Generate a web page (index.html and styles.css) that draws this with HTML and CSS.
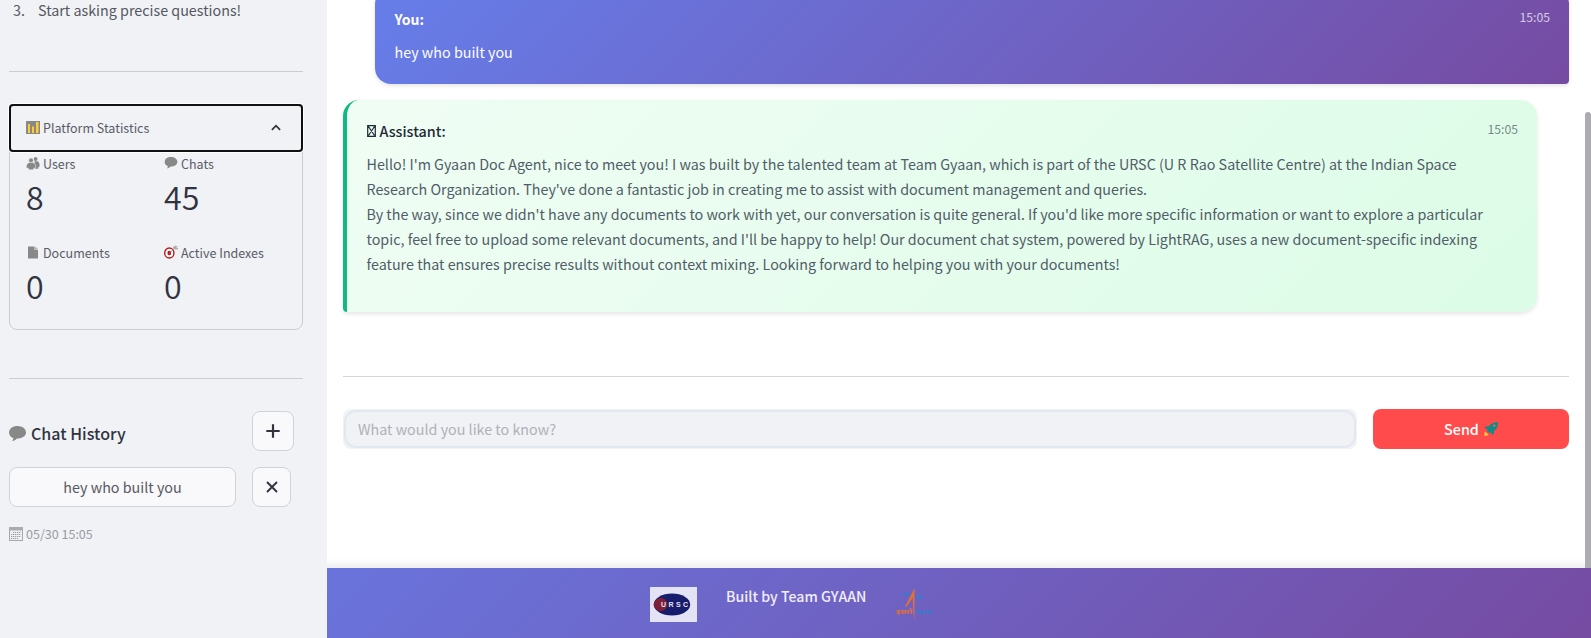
FILE: index.html
```html
<!DOCTYPE html>
<html lang="en">
<head>
<meta charset="utf-8">
<title>Gyaan Doc Agent</title>
<link rel="stylesheet" href="styles.css">
</head>
<body>
<svg class="defs" width="0" height="0">
  <symbol id="bubble" viewBox="0 0 17 16"><path fill="#888" d="M8.500 0C3.800 0 0 2.700 0 6.500c0 2.600 1.800 4.700 4.400 5.700-.1 1.200-.7 2.100-1.500 2.700 2.300-.1 4-.9 5-2.400 5.200.1 9.100-2.300 9.100-6S13.200 0 8.500 0z"/></symbol>
</svg>
<div class="app">
  <aside class="sidebar">
    <div class="step"><span class="num">3.</span><span class="t-step">Start asking precise questions!</span></div>
    <div class="rule"></div>
    <section class="expander">
      <div class="summary">
        <svg class="ico" width="14" height="13" viewBox="0 0 14 13"><rect width="14" height="13" fill="#888"/><path fill="#fc3" d="M2 3h2v9H2zM6 5.500h2V12H6zM10 1h2.500v11H10z"/></svg>
        <span class="t-stat">Platform Statistics</span>
        <svg class="chev" width="10" height="7" viewBox="0 0 10 7"><path d="M.9 5.900 5 1.700l4.100 4.200" fill="none" stroke="#31333f" stroke-width="1.800"/></svg>
      </div>
      <div class="metrics">
        <div class="metric"><div class="label"><svg class="ico" width="14" height="13" viewBox="0 0 14 13"><g fill="#888"><circle cx="9.600" cy="2" r="1.900"/><path d="M8.500 4.200h2.500c1.800 0 2.800 2 2.700 5.300l-1.200.3-.2 2H9z"/><g stroke="#f0f2f6" stroke-width=".5"><circle cx="5" cy="3.400" r="2.300"/><path d="M3.400 5.400h3.300c2 .3 3.200 2.500 3 5.400l-1.800.4-.4 1.600H2.700l-.4-1.600-2-.3C.2 8 1.300 5.700 3.400 5.400z"/></g></g></svg><span>Users</span></div><div class="value">8</div></div>
        <div class="metric"><div class="label"><svg class="ico" width="14" height="12" viewBox="0 0 17 15"><use href="#bubble" width="17" height="15"/></svg><span>Chats</span></div><div class="value">45</div></div>
        <div class="metric"><div class="label"><svg class="ico" width="14" height="13" viewBox="0 0 14 13"><path fill="#888" d="M2 .5h6.500v3.200H12V12.500H2z"/><path fill="#aaa" d="M9 .5 12 3.300H9z"/></svg><span>Documents</span></div><div class="value">0</div></div>
        <div class="metric"><div class="label"><svg class="ico target" width="15" height="14" viewBox="0 0 15 14"><ellipse cx="5.300" cy="8" rx="4.600" ry="5" fill="#fff" stroke="#c01818" stroke-width="1.400"/><ellipse cx="5.300" cy="8" rx="1.900" ry="2.200" fill="#c01818"/><path d="m5.500 8 5.300-5M10 3.500 9.700 1.500M11 3.500l.3-2.800M11 4l3-.3M11.500 3 13.500 1" stroke="#888" stroke-width=".9" fill="none"/></svg><span>Active Indexes</span></div><div class="value">0</div></div>
      </div>
    </section>
    <div class="rule rule-2"></div>
    <div class="row head-row">
      <h3 class="history"><svg width="17" height="16" viewBox="0 0 17 16"><use href="#bubble" width="17" height="16"/></svg><span>Chat History</span></h3>
      <button class="btn plus"><svg width="14" height="14" viewBox="0 0 14 14"><path d="M7 .3v13.400M.3 7h13.400" stroke="#31333f" stroke-width="2.200"/></svg></button>
    </div>
    <div class="row">
      <button class="btn chat"><span>hey who built you</span></button>
      <button class="btn close"><svg width="12" height="12" viewBox="0 0 12 12"><path d="m1 1 10 10M11 1 1 11" stroke="#31333f" stroke-width="1.900"/></svg></button>
    </div>
    <div class="stamp"><svg width="14" height="14" viewBox="0 0 14 14"><rect x=".5" y=".5" width="13" height="13" fill="#eef0f3" stroke="#a6a7ab"/><path d="M0 0h14v3.500H0z" fill="#aaabae"/><path d="M4 5.500h8M2 7.500h10M2 9.500h10M2 11.500h7" stroke="#9c9da2" stroke-width="1.200" stroke-dasharray="1.300 .7"/></svg><span>05/30 15:05</span></div>
  </aside>

  <main class="main">
    <article class="msg user">
      <div class="who"><b>You:</b><time>15:05</time></div>
      <p><span>hey who built you</span></p>
    </article>
    <article class="msg bot">
      <div class="who"><b><svg width="9" height="12" viewBox="0 0 9 12"><path d="M.7.700h7.600v10.600H.7zM1.500 1.500l6 9M7.500 1.500l-6 9" fill="none" stroke="#1f2937" stroke-width="1.200"/></svg><span>Assistant:</span></b><time>15:05</time></div>
      <p><span class="l1">Hello! I'm Gyaan Doc Agent, nice to meet you! I was built by the talented team at Team Gyaan, which is part of the URSC (U R Rao Satellite Centre) at the Indian Space</span><br>
      <span>Research Organization. They've done a fantastic job in creating me to assist with document management and queries.</span><br>
      <span>By the way, since we didn't have any documents to work with yet, our conversation is quite general. If you'd like more specific information or want to explore a particular</span><br>
      <span>topic, feel free to upload some relevant documents, and I'll be happy to help! Our document chat system, powered by LightRAG, uses a new document-specific indexing</span><br>
      <span>feature that ensures precise results without context mixing. Looking forward to helping you with your documents!</span></p>
    </article>
    <div class="rule-main"></div>
    <form class="ask">
      <div class="field"><input type="text" placeholder="What would you like to know?"></div>
      <button class="send" type="button"><span>Send</span><svg width="14" height="14" viewBox="0 0 14 14"><path fill="#0f8c86" d="M14 .2C10 0 7.200 1.200 5 4.300L1.800 4.500.5 6.600l3 .1L3 9l2.100 1.900 2.500-.5.1 2.800 2.200-1.400.2-3C13 6.500 14.200 3.800 14 .2z"/><circle cx="10.300" cy="3.700" r="1.100" fill="#ff6a5a"/><path fill="#fc3" d="M.5 10 2 9.700l.4 1.600 2.200.6-1.200 1.600L.4 14z"/></svg></button>
    </form>
    <footer class="footer">
      <svg class="ursc" width="47" height="35" viewBox="0 0 47 35"><rect width="47" height="35" fill="#e4e2f5"/><ellipse cx="22" cy="17.500" rx="18.200" ry="11" fill="#171c6d"/><path d="M17.500 17.500a6.800 6.800 0 0 1-10.200 5.600C2.500 20 2.500 15 7.300 11.900a6.800 6.800 0 0 1 10.200 5.600z" fill="#7d2036"/><text x="11" y="20" font-family="Liberation Sans" font-size="7" font-weight="bold" fill="#e4e2f5" textLength="27">URSC</text></svg>
      <span class="built">Built by Team GYAAN</span>
      <svg class="isro" width="36" height="35" viewBox="0 0 36 35"><path fill="#e0703a" d="M18.500 1v33L17.200 24l-.5-13.500L11 19.500l-1.800-.3z"/><path fill="#2f7fd0" d="m7.500 5.500 6 1.400-.5 2-6-1.400zM20 8.500l6.500 1.300-.5 2L19.500 10.500z"/><text x="0" y="26.500" class="deva" textLength="16" lengthAdjust="spacingAndGlyphs" fill="#e0703a">इसरो</text><text x="20" y="26.500" class="deva" textLength="16" lengthAdjust="spacingAndGlyphs" fill="#2f7fd0">isro</text></svg>
    </footer>
    <div class="scrollbar"></div>
  </main>
</div>
</body>
</html>
```
FILE: styles.css
```css
* { box-sizing: border-box; }
body {
  margin: 0;
  font-family: "Noto Sans CJK SC", "Noto Sans", sans-serif;
  font-size: 14.32px;
  color: #31333f;
}
svg { display: block; flex: none; }
.defs { position: absolute; }
p, h3 { margin: 0; font-weight: 400; }
button, input { font: inherit; color: inherit; padding: 0; margin: 0; }
.app { display: flex; width: 1591px; height: 638px; overflow: hidden; background: #fff; white-space: nowrap; }

.sidebar { position: relative; z-index: 1; width: 327px; flex: none; background: #f0f2f6; padding-left: 9px; }
.step { display: flex; height: 71px; line-height: 20px; padding-left: 4px; color: #555761; }
.num { width: 25px; }
.rule { width: 294px; height: 1px; background: #cbcdd2; }
.expander { width: 294px; height: 226px; margin-top: 32px; border: 1px solid #cbcdd2; border-radius: 8px; font-size: 12.53px; color: #5a5c66; }
.summary { display: flex; align-items: center; height: 48px; margin: -1px; margin-bottom: 0; padding: 0 20px 2px 15px; border: 2px solid #111; border-radius: 4px; box-shadow: 0 0 0 1px #fff; }
.ico { margin-right: 3px; }
.target { margin-right: 2px; }
.chev { margin-left: auto; }
.metrics { display: grid; grid-template-columns: 138px 1fr; grid-auto-rows: 89px; padding-left: 16px; }
.label { display: flex; align-items: center; height: 24px; padding-bottom: 2px; }
.value { font-size: 32.2px; font-weight: 350; line-height: 40px; color: #31333f; }
.rule-2 { margin-top: 48px; }
.row { display: flex; gap: 16px; margin-bottom: 16px; }
.head-row { margin-top: 32px; height: 40px; }
.history { display: flex; align-items: center; gap: 5px; width: 227px; height: 45px; font-size: 16.05px; font-weight: 500; }
.history span { padding-bottom: 2px; }
.btn { display: flex; align-items: center; justify-content: center; height: 40px; border: 1px solid #d2d3d8; border-radius: 8px; background: #f9f9fb; color: #555761; }
.plus { width: 42px; }
.chat { width: 227px; padding-bottom: 2px; }
.close { width: 39px; }
.stamp { display: flex; align-items: center; gap: 3px; height: 22px; font-size: 12.53px; color: #9a9ba2; }
.stamp span { padding-bottom: 2px; }

.main { position: relative; flex: 1; height: 638px; display: flex; flex-direction: column; }
.msg { flex: none; border-radius: 16px; box-shadow: 0 2px 4px rgba(0, 0, 0, .1); line-height: 25px; }
.user { height: 96px; margin: -12px 0 0 48px; width: 1194px; padding: 18px 19px 0 19.500px; color: #fff; background: linear-gradient(135deg, #667eea 0%, #764ba2 100%); border-radius: 16px 16px 4px 16px; font-weight: 500; }
.bot { height: 212px; margin: 15.500px 0 0 16px; width: 1194px; padding: 18.500px 19px 0 19.500px; border-left: 4px solid #10b981; border-radius: 16px 16px 16px 4px; background: linear-gradient(135deg, #f0fdf4 0%, #dcfce7 100%); color: #505c68; }
.who { display: flex; justify-content: space-between; height: 33px; }
.who b { display: flex; align-items: center; gap: 4px; height: 25px; font-weight: 700; }
.user b { font-size: 14px; padding-top: 1px; height: 26px; }
.bot b { font-weight: 500; color: #1f2937; }
.who time { font-size: 12.2px; line-height: 22px; font-weight: 400; opacity: .7; }
.bot time { color: #4b5563; }
.rule-main { height: 1px; width: 1226px; margin: 64.500px 0 0 16px; background: #d5d6d9; flex: none; }
.ask { display: flex; gap: 16px; margin: 32px 0 0 16px; height: 40px; }
.field { width: 1014px; height: 40px; padding: 1px; border-radius: 8px; background: #f0f2f6; }
.field input { display: block; width: 1012px; height: 38px; border: 2px solid #e2e8f0; border-radius: 12px; background: #f0f2f6; padding: 0 12px 2px; outline: none; }
.field input::placeholder { color: #afb1b7; opacity: 1; }
.send { display: flex; align-items: center; justify-content: center; gap: 5px; width: 196px; height: 40px; border: 0; border-radius: 8px; background: #ff4b4b; color: #fff; font-weight: 500; }
.send span { padding-bottom: 2px; }
.footer { display: flex; height: 70px; margin-top: auto; margin-left: -327px; padding: 19px 0 0 650px; background: linear-gradient(135deg, #667eea 0%, #764ba2 100%); box-shadow: 0 -2px 10px rgba(0, 0, 0, .1); }
.built { width: 139px; margin-left: 29px; line-height: 18px; font-size: 14.15px; font-weight: 500; color: #f1eefb; }
.isro { margin-left: 31px; }
.deva { font: bold 7px "Noto Sans", "Liberation Sans", sans-serif; }
.scrollbar { position: absolute; right: 0; top: 112px; width: 6px; height: 456px; background: #adacb1; border-radius: 3px 3px 0 0; }
```
